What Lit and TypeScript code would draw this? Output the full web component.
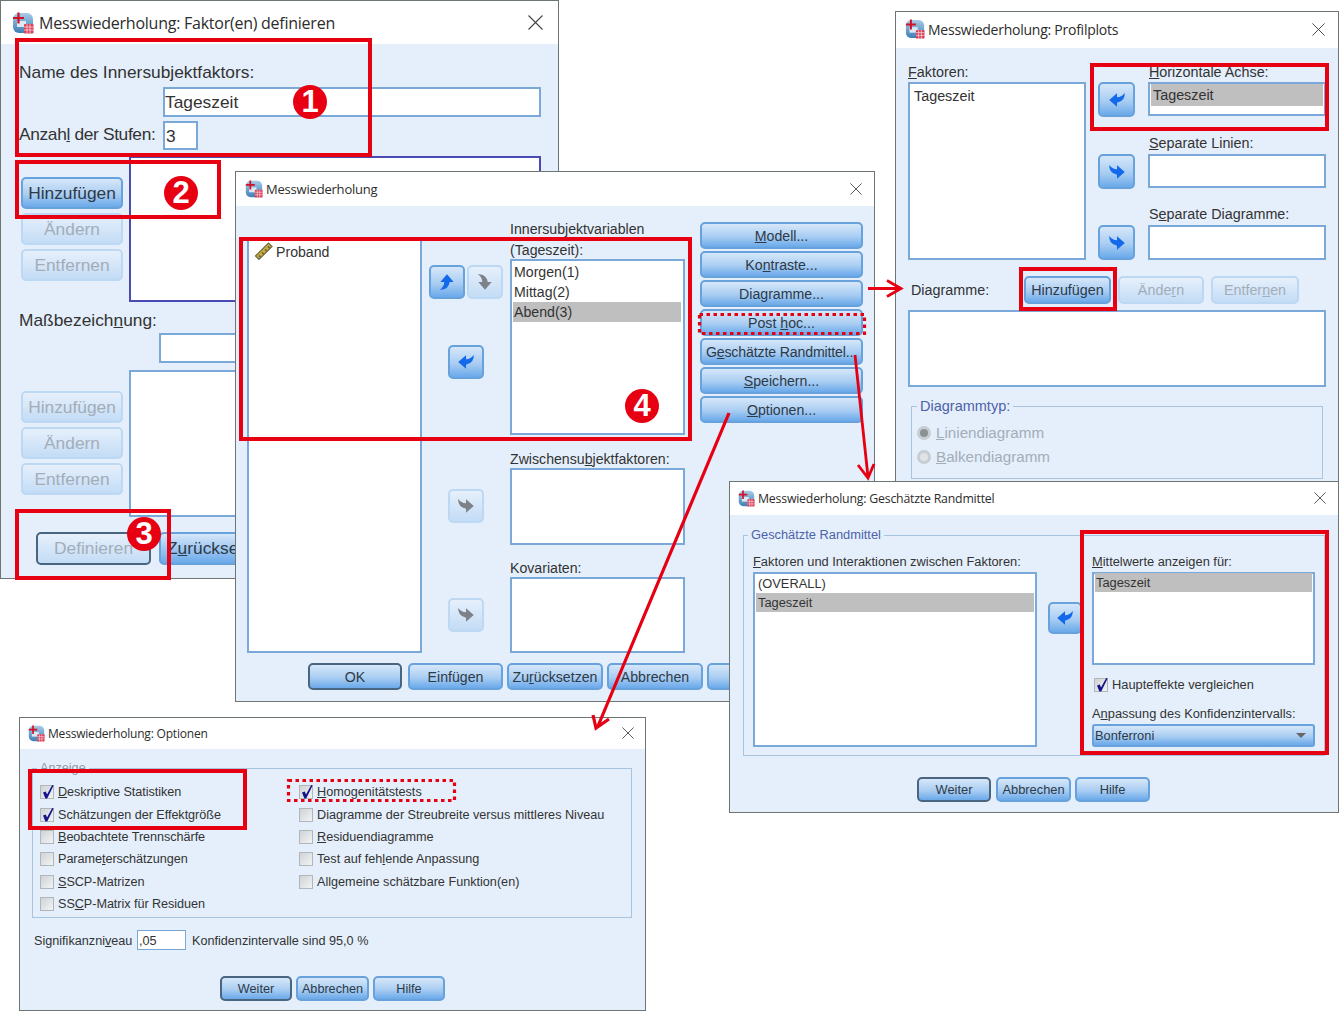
import { LitElement, html, css, svg } from "lit";
import { customElement } from "lit/decorators.js";

const appIcon = html`<svg class="ico" viewBox="0 0 22 22">
  <defs><linearGradient id="ig" x1="0" y1="0" x2="0" y2="1"><stop offset="0" stop-color="#a8cbe6"/><stop offset="1" stop-color="#3f7fb5"/></linearGradient></defs>
  <rect x="1" y="1" width="20" height="20" rx="6" fill="url(#ig)"/>
  <rect x="5" y="9" width="9" height="6" fill="#dbe9f5"/>
  <path d="M1 6h11M6.5 .5v11" stroke="#d3122a" stroke-width="2.2"/>
  <rect x="12" y="12" width="9.5" height="9.5" rx="1" fill="#d8405a"/>
  <path d="M12 15h9.5M12 18h9.5M15 12v9.5M18 12v9.5" stroke="#f7d7dc" stroke-width=".8"/>
</svg>`;

const closeX = html`<svg class="close" viewBox="0 0 15 15"><path d="M.5.5l14 14M14.5.5l-14 14" stroke="#444" stroke-width="1.1" fill="none"/></svg>`;

const arrowPath = "M1 9 L8 3 V6.5 Q12.5 6.5 15 2.5 Q15.5 10 8 11.5 V15 Z";
const arrow = (dir: string, off = false) => html`<svg class="ar ${dir} ${off ? "aroff" : ""}" viewBox="0 0 16 18"><path d=${arrowPath}/></svg>`;
const arrowBtn = (dir: string, cls = "", off = false) => html`<div class="btn abtn ${cls} ${off ? "off" : ""}">${arrow(dir, off)}</div>`;

const check = (on: boolean) => html`<span class="cb">${on ? html`<svg viewBox="0 0 13 13"><path d="M2 6.5L4.8 5.6L6 8.6L11.2 -1L12.6 -.4L6.2 12.4L4.4 12.4Z" fill="#14148a"/></svg>` : ""}</span>`;

@customElement("app-root")
export class AppRoot extends LitElement {
  static styles = css`
    :host { display: block; position: relative; width: 1339px; height: 1011px; overflow: hidden; background: #fff; font-family: "Liberation Sans", Arial, sans-serif; color: #333; }
    .win { position: absolute; box-sizing: border-box; border: 1px solid #6e7672; background: #e4effb; overflow: hidden; }
    .title { box-sizing: border-box; display: flex; align-items: center; background: #fff; font-family: "Open Sans", sans-serif; color: #2c2c2c; white-space: nowrap; }
    .close { margin-left: auto; display: block; }
    .ico { display: block; flex: none; }
    u { text-underline-offset: 1px; }
    .row { display: flex; }
    .btn { box-sizing: border-box; display: flex; align-items: center; justify-content: center; flex: none; border: 2px solid #68a2dc; border-radius: 5px; background: linear-gradient(#d6e7f9, #a9cdf2 55%, #6aa9ea); color: #2d3a48; white-space: nowrap; }
    .btn.off { border-color: #bdd8f2; background: linear-gradient(#e6f0fb, #c3dcf6); color: #a3adb8; }
    .btn.def { border-color: #4a6580; }
    .abtn { width: 37px; height: 35px; }
    .ar { width: 18px; height: 20px; fill: #1468ea; display: block; }
    .ar.aroff { fill: #7d8288; }
    .ar.right { transform: scaleX(-1); }
    .ar.up { transform: rotate(90deg) scaleY(-1); }
    .ar.down { transform: rotate(-90deg); }
    .list { box-sizing: border-box; flex: none; background: #fff; border: 2px solid #7aa8d8; }
    .item { padding-left: 1px; }
    .sel { background: #bfbfbf; }
    .input { box-sizing: border-box; flex: none; background: #fff; border: 2px solid #7aa8d8; display: flex; align-items: center; padding: 1px 0 0; }
    .cb { box-sizing: border-box; flex: none; width: 14px; height: 14px; border: 1px solid #b0b6ba; background: linear-gradient(135deg, #cfd3d6, #f2f3f4); display: block; }
    .cb svg { display: block; width: 13px; height: 13px; overflow: visible; }
    fieldset { box-sizing: border-box; margin: 0; padding: 0; border: 1px solid #a9c4de; min-width: 0; }
    legend { padding: 0 3px; color: #4d62a8; line-height: 20px; }

    /* window 1 */
    .w1 { left: 0; top: 0; width: 559px; height: 579px; font-size: 17.35px; }
    .w1 .title { height: 43px; padding: 0 15px 0 11px; gap: 5px; font-size: 16px; letter-spacing: -.25px; }
    .w1 .ico { width: 22px; height: 22px; }
    .w1 .close { width: 15px; height: 15px; }
    .w1 .body { padding: 18px 0 0 18px; }
    .w1 .lb { line-height: 20px; white-space: nowrap; }
    .w1 .name { margin: 5px 0 0 144px; width: 378px; height: 30px; }
    .w1 .lvl { margin-top: 4px; height: 29px; align-items: center; }
    .w1 .lvl .lb { width: 144px; margin-top: -4px; letter-spacing: -.35px; }
    .w1 .lvlin { width: 35px; height: 29px; padding-left: 1px; }
    .w1 .sec { margin: 6px 0 0 2px; gap: 6px; }
    .w1 .col { display: flex; flex-direction: column; gap: 4px; padding-top: 21px; }
    .w1 .col .btn { width: 102px; height: 32px; }
    .w1 .bigl { width: 412px; height: 146px; border-color: #4a4ab4; }
    .w1 .bigl2 { width: 412px; height: 147px; }
    .w1 .mb { margin-top: 8px; }
    .w1 .mbin { margin: 3px 0 0 140px; width: 382px; height: 30px; }
    .w1 .sec2 { margin-top: 7px; }
    .w1 .bot { margin: 15px 0 0 17px; gap: 8px; }
    .w1 .bot .btn { height: 33px; }
    .w1 .bdef { width: 115px; }
    .w1 .brs { width: 110px; justify-content: flex-start; padding-left: 6px; background: linear-gradient(#d6e7f9, #6aa9ea); }

    /* window 2 */
    .w2 { left: 235px; top: 171px; width: 640px; height: 531px; font-size: 14.15px; }
    .w2 .title { height: 34px; padding: 0 12px 1px 9px; gap: 3px; font-size: 13px; letter-spacing: -.2px; }
    .w2 .ico { width: 18px; height: 18px; }
    .w2 .close { width: 12px; height: 12px; }
    .w2 .main { padding-left: 11px; }
    .w2 .vars { margin-top: 32px; width: 175px; height: 415px; }
    .w2 .varrow { display: flex; align-items: center; gap: 2px; height: 24px; padding: 0 0 0 5px; }
    .w2 .ruler { width: 20px; height: 20px; flex: none; margin-bottom: 2px; }
    .w2 .mid { width: 88px; flex: none; padding-top: 59px; }
    .w2 .abtn { width: 36px; height: 34px; }
    .w2 .ud { margin-left: 7px; gap: 2px; }
    .w2 .m1 { margin: 46px 0 0 26px; }
    .w2 .m2 { margin: 110px 0 0 26px; }
    .w2 .m3 { margin: 75px 0 0 26px; }
    .w2 .rc { width: 175px; flex: none; padding-top: 13px; }
    .w2 .head { line-height: 21px; white-space: nowrap; }
    .w2 .l1 { width: 175px; height: 176px; margin-top: -2px; padding-top: 1px; }
    .w2 .l1 .item { line-height: 20px; margin: 0 2px 0 1px; }
    .w2 .lb2 { margin-top: 14px; line-height: 20px; white-space: nowrap; }
    .w2 .l2 { width: 175px; height: 77px; margin-top: -1px; }
    .w2 .lb3 { margin-top: 13px; line-height: 20px; }
    .w2 .l3 { width: 175px; height: 76px; margin-top: -1px; }
    .w2 .bc { display: flex; flex-direction: column; gap: 2px; margin: 16px 0 0 15px; }
    .w2 .bc .btn { width: 163px; height: 27px; padding-top: 1px; }
    .w2 .bc .tight { letter-spacing: -.15px; }
    .w2 .bar { margin: 10px 0 0 72px; gap: 4px; }
    .w2 .bar .btn { width: 96px; height: 27px; }
    .w2 .bar .ok { width: 94px; margin-right: 2px; }
    .w2 .bar .es { width: 95px; }

    /* window 3 */
    .w3 { left: 895px; top: 11px; width: 444px; height: 480px; font-size: 14.35px; }
    .w3 .title { height: 36px; padding: 0 13px 2px 9px; gap: 3px; font-size: 14px; letter-spacing: -.25px; }
    .w3 .ico { width: 20px; height: 20px; }
    .w3 .close { width: 13px; height: 13px; }
    .w3 .body { padding: 14px 0 0 12px; }
    .w3 .lb { line-height: 20px; white-space: nowrap; }
    .w3 .fac { width: 178px; height: 178px; }
    .w3 .fac .item { line-height: 24px; padding-left: 4px; }
    .w3 .rows { margin-left: 12px; }
    .w3 .rw { display: flex; gap: 13px; }
    .w3 .rw .lb { padding-left: 1px; }
    .w3 .abtn { margin-top: 21px; }
    .w3 .rw:first-child .abtn { margin-top: 20px; }
    .w3 .box { width: 178px; flex: none; margin-top: 1px; }
    .w3 .b1 { height: 34px; margin-top: 0; padding: 0 1px; }
    .w3 .b1 .sel { line-height: 22px; padding-left: 2px; }
    .w3 .r2 { margin-top: 16px; }
    .w3 .r3 { margin-top: 15px; }
    .w3 .h34 { height: 34px; }
    .w3 .h35 { height: 35px; }
    .w3 .dg { margin-top: 16px; align-items: center; }
    .w3 .dglb { margin-left: 3px; width: 113px; }
    .w3 .dg .btn { height: 28px; }
    .w3 .hz { width: 87px; margin-right: 7px; }
    .w3 .an { width: 86px; margin-right: 7px; }
    .w3 .en { width: 88px; }
    .w3 .dgl { width: 418px; height: 77px; margin-top: 6px; }
    .w3 fieldset { margin: 9px 0 0 3px; width: 412px; padding-bottom: 11px; }
    .w3 legend { margin-left: 5px; font-size: 14.5px; }
    .w3 .rad { display: flex; align-items: center; gap: 5px; line-height: 20px; color: #a3adb8; padding-left: 5px; font-size: 15.2px; }
    .w3 .r1 { margin-top: 7px; }
    .w3 .r22 { margin-top: 4px; }
    .w3 .rd { width: 14px; height: 14px; box-sizing: border-box; border-radius: 50%; border: 3px solid #c6cdd3; background: #fff; flex: none; }
    .w3 .rd.on { background: #8b9095; }
    .w3 .rd.no { background: #dfe3e6; }

    /* window 4 */
    .w4 { left: 729px; top: 481px; width: 610px; height: 332px; font-size: 12.85px; }
    .w4 .title { height: 33px; padding: 0 12px 1px 8px; gap: 3px; font-size: 12.3px; letter-spacing: -.2px; }
    .w4 .ico { width: 17px; height: 17px; }
    .w4 .close { width: 12px; height: 12px; }
    .w4 fieldset { margin: 10px 0 0 13px; width: 582px; padding: 7px 0 8px 9px; }
    .w4 legend { margin-left: -5px; }
    .w4 .lb { line-height: 20px; white-space: nowrap; }
    .w4 .lc { width: 284px; height: 175px; padding: 0 1px; }
    .w4 .lc .item { line-height: 19px; padding-left: 2px; }
    .w4 .abtn { width: 34px; height: 32px; margin: 50px 10px 0 11px; }
    .w4 .lr { width: 223px; height: 93px; padding: 0 1px; }
    .w4 .lr .item { line-height: 19px; margin-top: -1px; padding-left: 1px; }
    .w4 .chk { display: flex; align-items: center; gap: 4px; margin-top: 10px; line-height: 20px; padding-left: 2px; }
    .w4 .anp { margin-top: 9px; }
    .w4 .dd { width: 223px; height: 23px; border-radius: 3px; justify-content: space-between; padding: 0 7px 0 1px; }
    .w4 .tri { width: 0; height: 0; border: 5px solid transparent; border-top: 5px solid #666; border-bottom: 0; }
    .w4 .bar { margin: 21px 0 0 187px; gap: 4px; }
    .w4 .bar .btn { height: 25px; width: 75px; }
    .w4 .bar .def { width: 74px; margin-right: 1px; }

    /* window 5 */
    .w5 { left: 19px; top: 717px; width: 627px; height: 294px; font-size: 12.65px; }
    .w5 .title { height: 31px; padding: 0 11px 1px 8px; gap: 3px; font-size: 12px; letter-spacing: -.2px; }
    .w5 .ico { width: 17px; height: 17px; }
    .w5 .close { width: 12px; height: 12px; }
    .w5 fieldset { margin: 9px 0 0 12px; width: 600px; padding: 3px 0 2px 7px; }
    .w5 legend { margin-left: -3px; color: #8d98a6; }
    .w5 .cols { display: flex; }
    .w5 .c1 { width: 259px; flex: none; }
    .w5 .opt { display: flex; align-items: center; gap: 4px; height: 22.4px; white-space: nowrap; }
    .w5 .c1 .opt span:last-child { letter-spacing: -.05px; }
    .w5 .sig { margin: 12px 0 0 14px; height: 20px; align-items: center; white-space: nowrap; }
    .w5 .sig span { padding-top: 1px; }
    .w5 .sl { width: 103px; flex: none; }
    .w5 .sin { width: 49px; height: 20px; margin-right: 6px; border-width: 1.5px; padding-left: 1px; }
    .w5 .bar { margin: 26px 0 0 200px; gap: 4px; }
    .w5 .bar .btn { height: 25px; width: 72px; }
    .w5 .bar .mid { width: 73px; }

    .marks { position: absolute; left: 0; top: 0; width: 1339px; height: 1011px; pointer-events: none; }
    .badge { position: absolute; width: 34px; height: 34px; border-radius: 50%; background: #e60012; color: #fff; font-weight: 700; font-size: 31px; line-height: 34px; text-align: center; }
    .b-1 { left: 293px; top: 85px; }
    .b-2 { left: 164px; top: 176px; }
    .b-3 { left: 127px; top: 517px; }
    .b-4 { left: 625px; top: 389px; }
  `;

  private win1() {
    return html`<div class="win w1">
      <div class="title">${appIcon}<span>Messwiederholung: Faktor(en) definieren</span>${closeX}</div>
      <div class="body">
        <div class="lb">Name des Innersubjektfaktors:</div>
        <div class="input name">Tageszeit</div>
        <div class="row lvl"><div class="lb">Anzah<u>l</u> der Stufen:</div><div class="input lvlin">3</div></div>
        <div class="row sec">
          <div class="col"><div class="btn">Hinzufügen</div><div class="btn off">Ändern</div><div class="btn off">Entfernen</div></div>
          <div class="list bigl"></div>
        </div>
        <div class="lb mb">Maßbezeich<u>n</u>ung:</div>
        <div class="input mbin"></div>
        <div class="row sec sec2">
          <div class="col"><div class="btn off">Hinzufügen</div><div class="btn off">Ändern</div><div class="btn off">Entfernen</div></div>
          <div class="list bigl2"></div>
        </div>
        <div class="row bot"><div class="btn off def bdef">Definieren</div><div class="btn brs"><span>Z<u>u</u>rücksetzen</span></div></div>
      </div>
    </div>`;
  }

  private win2() {
    return html`<div class="win w2">
      <div class="title">${appIcon}<span>Messwiederholung</span>${closeX}</div>
      <div class="row main">
        <div class="list vars">
          <div class="varrow">
            <svg class="ruler" viewBox="0 0 20 20"><path d="M1.5 15L14.5 2L18 5.5L5 18.5Z" fill="#c9ae3c" stroke="#6e6a4a" stroke-width="1.2"/><path d="M5 14.5l1.5 1.5M8 11.5l1.5 1.5M11 8.5l1.5 1.5M14 5.5l1.5 1.5" stroke="#5a5630" stroke-width="1.3"/></svg>
            <span>Proband</span>
          </div>
        </div>
        <div class="mid">
          <div class="row ud">${arrowBtn("up")}${arrowBtn("down", "", true)}</div>
          ${arrowBtn("left", "m1")}
          ${arrowBtn("right", "m2", true)}
          ${arrowBtn("right", "m3", true)}
        </div>
        <div class="rc">
          <div class="head">Innersubjektvariablen<br />(Tageszeit):</div>
          <div class="list l1"><div class="item">Morgen(1)</div><div class="item">Mittag(2)</div><div class="item sel">Abend(3)</div></div>
          <div class="lb2">Zwischensu<u>b</u>jektfaktoren:</div>
          <div class="list l2"></div>
          <div class="lb3">Kovariaten:</div>
          <div class="list l3"></div>
        </div>
        <div class="bc">
          <div class="btn"><span><u>M</u>odell...</span></div>
          <div class="btn"><span>Ko<u>n</u>traste...</span></div>
          <div class="btn">Diagramme...</div>
          <div class="btn"><span>Post <u>h</u>oc...</span></div>
          <div class="btn tight"><span>G<u>e</u>schätzte Randmittel...</span></div>
          <div class="btn"><span><u>S</u>peichern...</span></div>
          <div class="btn"><span><u>O</u>ptionen...</span></div>
        </div>
      </div>
      <div class="row bar">
        <div class="btn def ok">OK</div><div class="btn es">Einfügen</div><div class="btn"><span>Zu<u>r</u>ücksetzen</span></div><div class="btn">Abbrechen</div><div class="btn">Hilfe</div>
      </div>
    </div>`;
  }

  private win3() {
    return html`<div class="win w3">
      <div class="title">${appIcon}<span>Messwiederholung: Profilplots</span>${closeX}</div>
      <div class="body">
        <div class="row">
          <div>
            <div class="lb"><u>F</u>aktoren:</div>
            <div class="list fac"><div class="item">Tageszeit</div></div>
          </div>
          <div class="rows">
            <div class="rw">${arrowBtn("left")}<div><div class="lb"><u>H</u>orizontale Achse:</div><div class="list box b1"><div class="sel">Tageszeit</div></div></div></div>
            <div class="rw r2">${arrowBtn("right")}<div><div class="lb"><u>S</u>eparate Linien:</div><div class="list box h34"></div></div></div>
            <div class="rw r3">${arrowBtn("right")}<div><div class="lb">S<u>e</u>parate Diagramme:</div><div class="list box h35"></div></div></div>
          </div>
        </div>
        <div class="row dg">
          <div class="lb dglb">Diagramme:</div>
          <div class="btn hz">Hinzufügen</div>
          <div class="btn off an"><span>Ände<u>r</u>n</span></div>
          <div class="btn off en"><span>Entfer<u>n</u>en</span></div>
        </div>
        <div class="list dgl"></div>
        <fieldset>
          <legend>Diagrammtyp:</legend>
          <div class="rad r1"><span class="rd on"></span><span><u>L</u>iniendiagramm</span></div>
          <div class="rad r22"><span class="rd no"></span><span><u>B</u>alkendiagramm</span></div>
        </fieldset>
      </div>
    </div>`;
  }

  private win4() {
    return html`<div class="win w4">
      <div class="title">${appIcon}<span>Messwiederholung: Geschätzte Randmittel</span>${closeX}</div>
      <fieldset>
        <legend>Geschätzte Randmittel</legend>
        <div class="row">
          <div>
            <div class="lb"><u>F</u>aktoren und Interaktionen zwischen Faktoren:</div>
            <div class="list lc"><div class="item">(OVERALL)</div><div class="item sel">Tageszeit</div></div>
          </div>
          ${arrowBtn("left")}
          <div>
            <div class="lb"><u>M</u>ittelwerte anzeigen für:</div>
            <div class="list lr"><div class="item sel">Tageszeit</div></div>
            <div class="chk">${check(true)}<span>Haupteffekte vergleichen</span></div>
            <div class="lb anp">A<u>n</u>passung des Konfidenzintervalls:</div>
            <div class="btn dd"><span>Bonferroni</span><span class="tri"></span></div>
          </div>
        </div>
      </fieldset>
      <div class="row bar"><div class="btn def">Weiter</div><div class="btn">Abbrechen</div><div class="btn">Hilfe</div></div>
    </div>`;
  }

  private win5() {
    const opt = (on: boolean, t: unknown) => html`<div class="opt">${check(on)}<span>${t}</span></div>`;
    return html`<div class="win w5">
      <div class="title">${appIcon}<span>Messwiederholung: Optionen</span>${closeX}</div>
      <fieldset>
        <legend>Anzeige</legend>
        <div class="cols">
          <div class="c1">
            ${opt(true, html`<u>D</u>eskriptive Statistiken`)}
            ${opt(true, html`Schätzun<u>g</u>en der Effektgröße`)}
            ${opt(false, html`<u>B</u>eobachtete Trennschärfe`)}
            ${opt(false, html`Parame<u>t</u>erschätzungen`)}
            ${opt(false, html`<u>S</u>SCP-Matrizen`)}
            ${opt(false, html`SS<u>C</u>P-Matrix für Residuen`)}
          </div>
          <div>
            ${opt(true, html`<u>H</u>omogenitätstests`)}
            ${opt(false, html`Diagramme der Streubreite versus mittleres Niveau`)}
            ${opt(false, html`<u>R</u>esiduendiagramme`)}
            ${opt(false, html`Test auf feh<u>l</u>ende Anpassung`)}
            ${opt(false, html`All<u>g</u>emeine schätzbare Funktion(en)`)}
          </div>
        </div>
      </fieldset>
      <div class="row sig"><span class="sl">Signifikanzni<u>v</u>eau</span><div class="input sin">,05</div><span>Konfidenzintervalle sind 95,0 %</span></div>
      <div class="row bar"><div class="btn def">Weiter</div><div class="btn mid">Abbrechen</div><div class="btn">Hilfe</div></div>
    </div>`;
  }

  private marks() {
    const boxes = [
      [15, 38, 372, 157], [15, 160, 221, 219], [15, 509, 171, 580], [239, 237, 692, 441],
      [1090, 63, 1329, 131], [1019, 267, 1117, 311], [1080, 530, 1329, 755], [28, 769, 247, 830],
    ];
    const dotted = [[698, 313, 866, 335], [287, 779, 456, 802]];
    const red = "#e60012";
    return html`<svg class="marks" viewBox="0 0 1339 1011">
      ${boxes.map(([a, b, c, d]) => svg`<rect x=${a + 2} y=${b + 2} width=${c - a - 4} height=${d - b - 4} fill="none" stroke=${red} stroke-width="4"/>`)}
      ${dotted.map(([a, b, c, d]) => svg`<rect x=${a + 1.5} y=${b + 1.5} width=${c - a - 3} height=${d - b - 3} fill="none" stroke=${red} stroke-width="3.2" stroke-dasharray="3.5 3.5"/>`)}
      <g fill="none" stroke=${red} stroke-width="2.8">
        <path d="M868 288.5H900M887 280.5L901 288.5L887 296.5"/>
        <path d="M855 355L868 477M858 465L868 478L874 464"/>
        <path d="M729 413L598 726M593 715L596 728L609 719" stroke-width="3.2"/>
      </g>
    </svg>`;
  }

  render() {
    return html`
      ${this.win1()}
      ${this.win2()}
      ${this.win3()}
      ${this.win4()}
      ${this.win5()}
      ${this.marks()}
      <div class="badge b-1">1</div>
      <div class="badge b-2">2</div>
      <div class="badge b-3">3</div>
      <div class="badge b-4">4</div>
    `;
  }
}
